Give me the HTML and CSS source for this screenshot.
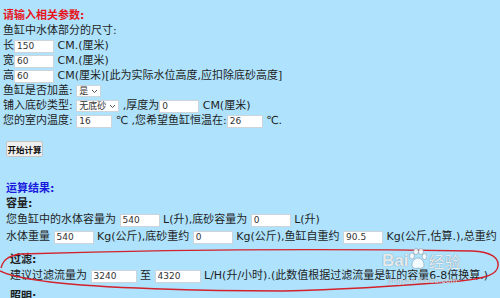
FILE: index.html
```html
<!DOCTYPE html>
<html>
<head>
  <title>鱼缸参数计算</title>
  <link rel="stylesheet" href="styles.css">
</head>
<body>
  <div class="page">
    <div class="params">
      <div class="line title">请输入相关参数:</div>
      <div class="line">鱼缸中水体部分的尺寸:</div>
      <div class="line">长<input class="box" value="150"> CM.(厘米)</div>
      <div class="line">宽<input class="box" value="60"> CM.(厘米)</div>
      <div class="line">高<input class="box" value="60"> CM(厘米)[此为实际水位高度,应扣除底砂高度]</div>
      <div class="line">鱼缸是否加盖: <span class="pick"><select><option>是</option></select><svg class="chev" width="7" height="5" viewBox="0 0 7 5"><path d="M1 1l2.5 2.5L6 1" fill="none" stroke="#555" stroke-width="1"/></svg></span></div>
      <div class="line">铺入底砂类型: <span class="pick"><select><option>无底砂</option></select><svg class="chev" width="7" height="5" viewBox="0 0 7 5"><path d="M1 1l2.5 2.5L6 1" fill="none" stroke="#555" stroke-width="1"/></svg></span> ,厚度为<input class="box" value="0"> CM(厘米)</div>
      <div class="line">您的室内温度: <input class="box small" value="16"> ℃ ,您希望鱼缸恒温在:<input class="box small" value="26"> ℃.</div>
      <button class="calc">开始计算</button>
    </div>

    <div class="result">
      <div class="line heading">运算结果:</div>
      <div class="line strong">容量:</div>
      <div class="line tall">您鱼缸中的水体容量为 <input class="box" value="540"> L(升),底砂容量为 <input class="box" value="0"> L(升)</div>
      <div class="line tall">水体重量 <input class="box" value="540"> Kg(公斤),底砂重约 <input class="box" value="0"> Kg(公斤),鱼缸自重约 <input class="box" value="90.5"> Kg(公斤,估算.),总重约 <input class="box" value="630.5"></div>
      <div class="filter">
        <div class="line strong">过滤:</div>
        <div class="line tall">建议过滤流量为 <input class="box wide" value="3240"> 至 <input class="box wide" value="4320"> L/H(升/小时).(此数值根据过滤流量是缸的容量6-8倍换算.)</div>
      </div>
      <div class="line strong light">照明:</div>
    </div>
  </div>

  <!-- hand-drawn annotation round the filter block -->
  <svg class="mark" width="500" height="298" viewBox="0 0 500 298">
    <path d="M1 268 C3 260 8 256 20 254 C120 251 300 248 472 251 C492 252 499 258 498 266 C497 274 488 278 460 281 C400 286 330 290 283 291 C200 291 100 288 50 282 C25 279 8 275 0 271" fill="none" stroke="#d2222c" stroke-width="1.4"/>
  </svg>

  <div class="watermark">
    <div class="wm-top">
      <span class="wm-bai">Bai</span>
      <svg width="19" height="22" viewBox="0 0 19 22">
        <g fill="rgba(255,255,255,0.85)" stroke="rgba(80,100,120,0.6)" stroke-width="0.6">
          <ellipse cx="4" cy="8" rx="2.4" ry="3"/>
          <ellipse cx="8" cy="3.5" rx="2.4" ry="3"/>
          <ellipse cx="13" cy="3.5" rx="2.4" ry="3"/>
          <ellipse cx="16.5" cy="8.5" rx="2.3" ry="3"/>
          <path d="M4 17 C4 12 8 10 10 10 C13 10 16 13 16 17 C16 20 13 21 10 20 C7 21 4 20 4 17Z"/>
        </g>
      </svg>
      <span class="wm-jy">经验</span>
    </div>
    <div class="wm-url">jingyan.baidu.com</div>
  </div>
</body>
</html>
```

FILE: styles.css
```css
html, body {
  margin: 0;
  padding: 0;
  overflow: hidden;
}
body {
  width: 500px;
  height: 298px;
  position: relative;
  background-color: #afe3fd;
  color: #1e1e1e;
  font-family: "DejaVu Sans", "Noto Sans CJK SC", sans-serif;
  font-size: 11px;
}
.page {
  padding-top: 8px;
}
.line {
  height: 15px;
  line-height: 15px;
  white-space: nowrap;
}
.line.tall {
  height: 17px;
  line-height: 17px;
}
.params {
  padding-left: 3px;
}
.title {
  color: #e8141b;
  font-weight: bold;
}
.box {
  box-sizing: border-box;
  width: 40px;
  height: 13px;
  margin: 0;
  padding: 0 2px;
  border: 1px solid #cdd5da;
  background-color: #ffffff;
  color: #333;
  font-family: "DejaVu Sans", sans-serif;
  font-size: 9px;
  vertical-align: middle;
  outline: none;
}
.box.small {
  width: 36px;
}
.box.wide {
  width: 46px;
}
.pick {
  box-sizing: border-box;
  display: inline-flex;
  align-items: center;
  gap: 2px;
  height: 12px;
  padding: 0 2px;
  border: 1px solid #cdd5da;
  background-color: #ffffff;
  vertical-align: middle;
}
.pick select {
  appearance: none;
  -webkit-appearance: none;
  border: none;
  background: transparent;
  margin: 0;
  padding: 0;
  color: #333;
  font-family: "Noto Sans CJK SC", sans-serif;
  font-size: 9px;
  line-height: 10px;
  outline: none;
}
.chev {
  display: block;
}
.calc {
  display: block;
  box-sizing: border-box;
  width: 37px;
  height: 16px;
  margin: 13px 0 0 3px;
  padding: 0;
  border: 1px solid #c4c4c4;
  border-radius: 2px;
  background-color: #efefef;
  color: #111;
  font-family: "Noto Sans CJK SC", sans-serif;
  font-size: 8.5px;
  font-weight: bold;
}
.result {
  margin-top: 24px;
  padding-left: 6px;
}
.heading {
  color: #1a1adf;
  font-weight: bold;
}
.strong {
  font-weight: bold;
}
.filter {
  margin-top: 7px;
  padding-left: 4px;
}
.light {
  margin-top: 5px;
  padding-left: 4px;
}

/* overlays */
.mark {
  position: absolute;
  top: 0;
  left: 0;
  pointer-events: none;
}
.watermark {
  position: absolute;
  left: 382px;
  top: 244px;
  pointer-events: none;
  color: rgba(255, 255, 255, 0.85);
  text-shadow: 0 0 1px rgba(60, 80, 100, 0.75);
}
.wm-top {
  display: flex;
  align-items: flex-end;
  height: 26px;
}
.wm-bai {
  font-family: "Liberation Sans", sans-serif;
  font-size: 17px;
  font-weight: bold;
  line-height: 18px;
}
.wm-jy {
  font-family: "Noto Sans CJK SC", sans-serif;
  font-size: 16px;
  line-height: 18px;
  margin-left: 1px;
}
.wm-url {
  margin: 6px 0 0 6px;
  font-family: "Liberation Sans", sans-serif;
  font-size: 8px;
  letter-spacing: 0.3px;
}
```
